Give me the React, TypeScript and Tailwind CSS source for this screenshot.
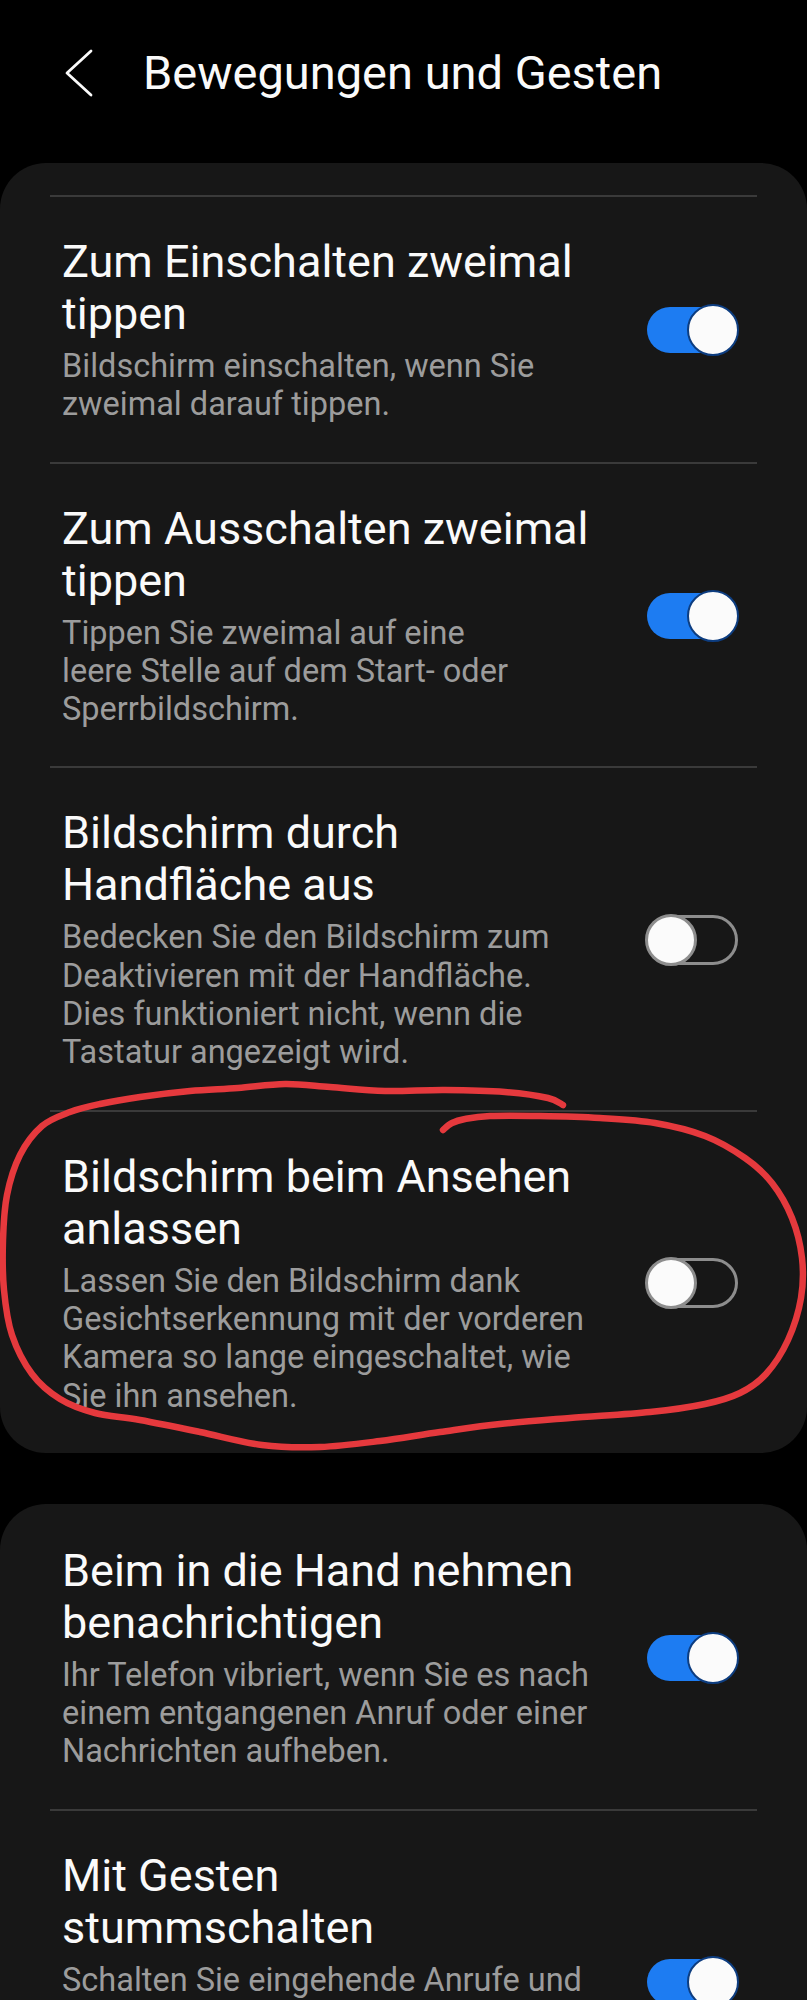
import React from "react";

type Item = { title: string[]; sub: string[]; on: boolean };

const card1: Item[] = [
  {
    title: ["Zum Einschalten zweimal", "tippen"],
    sub: ["Bildschirm einschalten, wenn Sie", "zweimal darauf tippen."],
    on: true,
  },
  {
    title: ["Zum Ausschalten zweimal", "tippen"],
    sub: ["Tippen Sie zweimal auf eine", "leere Stelle auf dem Start- oder", "Sperrbildschirm."],
    on: true,
  },
  {
    title: ["Bildschirm durch", "Handfläche aus"],
    sub: [
      "Bedecken Sie den Bildschirm zum",
      "Deaktivieren mit der Handfläche.",
      "Dies funktioniert nicht, wenn die",
      "Tastatur angezeigt wird.",
    ],
    on: false,
  },
  {
    title: ["Bildschirm beim Ansehen", "anlassen"],
    sub: [
      "Lassen Sie den Bildschirm dank",
      "Gesichtserkennung mit der vorderen",
      "Kamera so lange eingeschaltet, wie",
      "Sie ihn ansehen.",
    ],
    on: false,
  },
];

const card2: Item[] = [
  {
    title: ["Beim in die Hand nehmen", "benachrichtigen"],
    sub: ["Ihr Telefon vibriert, wenn Sie es nach", "einem entgangenen Anruf oder einer", "Nachrichten aufheben."],
    on: true,
  },
  {
    title: ["Mit Gesten", "stummschalten"],
    sub: [
      "Schalten Sie eingehende Anrufe und",
      "Alarme stumm, indem Sie den",
      "Bildschirm mit der Hand abdecken",
      "oder das Telefon umdrehen.",
    ],
    on: true,
  },
];

function Toggle({ on }: { on: boolean }) {
  return (
    <div className="relative w-[94px] h-[52px] shrink-0">
      {on ? (
        <>
          <div className="absolute left-[2px] right-[2px] top-[3px] bottom-[3px] rounded-full bg-[#1d7cf2]" />
          <div className="absolute right-0 top-0 w-[52px] h-[52px] rounded-full bg-[#fbfbfb] border-[2px] border-[#0d3d80]" />
        </>
      ) : (
        <>
          <div className="absolute left-[4px] right-[1px] top-[1px] bottom-[1px] rounded-full border-[3px] border-[#8d8d8d]" />
          <div className="absolute left-0 top-0 w-[52px] h-[52px] rounded-full bg-[#fbfbfb] border-[3px] border-[#8d8d8d]" />
        </>
      )}
    </div>
  );
}

function Row({ item, divider }: { item: Item; divider: boolean }) {
  return (
    <div>
      {divider && <div className="h-[2px] bg-[#3a3a3a]" />}
      <div className="flex items-center pt-[39px] pb-[38px] pl-[12px] pr-[18px]">
        <div className="flex-1 min-w-0">
          <div className="text-[45px] leading-[52px] text-[#fafafa]">
            {item.title.map((t) => (
              <div key={t} className="whitespace-nowrap">
                {t}
              </div>
            ))}
          </div>
          <div className="mt-[7px] text-[32.5px] leading-[38.3px] text-[#9c9c9c]">
            {item.sub.map((t) => (
              <div key={t} className="whitespace-nowrap">
                {t}
              </div>
            ))}
          </div>
        </div>
        <Toggle on={item.on} />
      </div>
    </div>
  );
}

function smooth(pts: number[][]) {
  let d = `M${pts[0][0]},${pts[0][1]}`;
  for (let i = 0; i < pts.length - 1; i++) {
    const p0 = pts[i - 1] || pts[i];
    const p1 = pts[i];
    const p2 = pts[i + 1];
    const p3 = pts[i + 2] || p2;
    const c1x = p1[0] + (p2[0] - p0[0]) / 6;
    const c1y = p1[1] + (p2[1] - p0[1]) / 6;
    const c2x = p2[0] - (p3[0] - p1[0]) / 6;
    const c2y = p2[1] - (p3[1] - p1[1]) / 6;
    d += ` C${c1x.toFixed(1)},${c1y.toFixed(1)} ${c2x.toFixed(1)},${c2y.toFixed(1)} ${p2[0]},${p2[1]}`;
  }
  return d;
}

const loop: number[][] = [
  [563, 1105],
  [548, 1098],
  [505, 1092],
  [445, 1090],
  [385, 1091],
  [330, 1087],
  [285, 1084],
  [238, 1088],
  [190, 1091],
  [140, 1097],
  [100, 1104],
  [70, 1112],
  [42, 1126],
  [20, 1155],
  [7, 1195],
  [3, 1240],
  [4, 1290],
  [12, 1335],
  [32, 1374],
  [60, 1399],
  [95, 1413],
  [140, 1420],
  [200, 1432],
  [262, 1445],
  [320, 1447],
  [380, 1441],
  [440, 1432],
  [500, 1424],
  [570, 1418],
  [650, 1412],
  [705, 1404],
  [740, 1393],
  [766, 1374],
  [788, 1340],
  [801, 1298],
  [802, 1258],
  [792, 1218],
  [772, 1183],
  [745, 1158],
  [705, 1136],
  [655, 1123],
  [600, 1118],
  [540, 1116],
  [490, 1116],
  [465, 1119],
  [452, 1123],
  [443, 1130],
];

export default function App() {
  return (
    <div className="relative w-full h-[2000px] overflow-hidden bg-black font-['Roboto',sans-serif]">
      <div className="flex items-center h-[146px]">
        <svg className="ml-[64px] shrink-0" width="30" height="50" viewBox="0 0 30 50" fill="none">
          <polyline
            points="27,3 3,25 27,47"
            stroke="#fafafa"
            strokeWidth="2.8"
            strokeLinecap="round"
            strokeLinejoin="round"
          />
        </svg>
        <div className="ml-[49px] text-[47px] leading-[52px] text-[#fafafa] whitespace-nowrap">
          Bewegungen und Gesten
        </div>
      </div>

      <div className="mt-[17px] rounded-[46px] bg-[#171717] px-[50px] pt-[32px]">
        {card1.map((it) => (
          <Row key={it.title[0]} item={it} divider={true} />
        ))}
      </div>

      <div className="mt-[51px] rounded-[46px] bg-[#171717] px-[50px] pt-[2px]">
        {card2.map((it, i) => (
          <Row key={it.title[0]} item={it} divider={i > 0} />
        ))}
      </div>

      <svg
        className="absolute left-0 top-0 pointer-events-none"
        width="807"
        height="2000"
        viewBox="0 0 807 2000"
        fill="none"
      >
        <path
          d={smooth(loop)}
          stroke="#e5393d"
          strokeWidth="6.5"
          strokeLinecap="round"
          strokeLinejoin="round"
        />
      </svg>
    </div>
  );
}
